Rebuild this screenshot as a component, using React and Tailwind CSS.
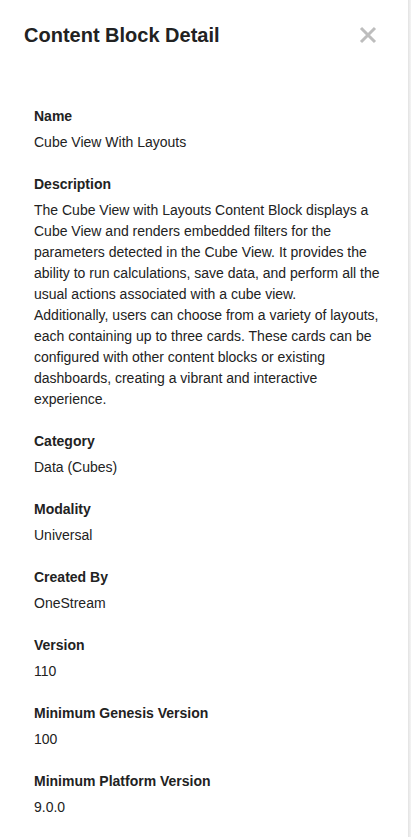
import React from "react";

const sections = [
  { label: "Name", value: "Cube View With Layouts" },
  {
    label: "Description",
    value: (
      <>
        The Cube View with Layouts Content Block displays a Cube View and renders embedded filters for the parameters detected in the Cube View. It provides the ability to run calculations, save data, and perform all the usual actions associated with a cube view.
        <br />
        Additionally, users can choose from a variety of layouts, each containing up to three cards. These cards can be configured with other content blocks or existing dashboards, creating a vibrant and interactive experience.
      </>
    ),
  },
  { label: "Category", value: "Data (Cubes)" },
  { label: "Modality", value: "Universal" },
  { label: "Created By", value: "OneStream" },
  { label: "Version", value: "110" },
  { label: "Minimum Genesis Version", value: "100" },
  { label: "Minimum Platform Version", value: "9.0.0" },
];

export default function App() {
  return (
    <div className="flex min-h-[837px] bg-white font-['Liberation_Sans',Arial,sans-serif] text-[#222]">
      <div className="flex-1">
        <div className="flex items-center justify-between pl-6 pr-[31px] pt-[23px]">
          <h2 className="text-[20px] font-bold leading-6 text-[#222]">Content Block Detail</h2>
          <button className="flex h-[18px] w-[18px] items-center justify-center" aria-label="Close">
            <svg width="18" height="18" viewBox="0 0 18 18">
              <path d="M2 2 L16 16 M16 2 L2 16" stroke="#bdbdbd" strokeWidth="3" strokeLinecap="butt" />
            </svg>
          </button>
        </div>
        <div className="pl-[34px] pr-6 pt-[59px]">
          {sections.map((s) => (
            <div key={s.label} className="mb-[21px]">
              <div className="mb-[5px] text-[14px] font-bold leading-[21px]">{s.label}</div>
              <div className="text-[14px] leading-[21px]">{s.value}</div>
            </div>
          ))}
        </div>
      </div>
      <div className="w-[3px] bg-linear-to-r from-[#e2e2e2] to-[#f5f5f5]" />
    </div>
  );
}
